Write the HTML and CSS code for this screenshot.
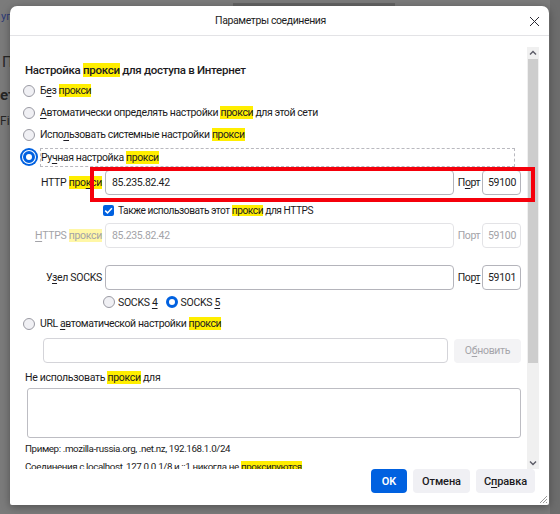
FILE: index.html
```html
<!DOCTYPE html>
<html lang="ru">
<head>
<meta charset="utf-8">
<title>Параметры соединения</title>
<link rel="stylesheet" href="styles.css">
</head>
<body>
<div class="backdrop">
  <span class="bg-text bg-1">уп</span>
  <span class="bg-text bg-2">П</span>
  <span class="bg-text bg-3">ет</span>
  <span class="bg-text bg-4">Fir</span>
  <span class="bg-bar"></span>
  <span class="bg-strip"></span>
</div>

<div class="dialog">
  <div class="titlebar">
    <div class="title">Параметры соединения</div>
    <div class="close">
      <svg width="11" height="11" viewBox="0 0 11 11"><path d="M1 1 L10 10 M10 1 L1 10" stroke="#2b2a33" stroke-width="1" fill="none"/></svg>
    </div>
  </div>

  <div class="body">
    <div class="content">
      <div class="heading">Настройка <span class="hl">прокси</span> для доступа в Интернет</div>

      <div class="radio-row"><span class="radio"></span><span class="rlabel">Б<u>е</u>з <span class="hl">прокси</span></span></div>
      <div class="radio-row"><span class="radio"></span><span class="rlabel"><u>А</u>втоматически определять настройки <span class="hl">прокси</span> для этой сети</span></div>
      <div class="radio-row"><span class="radio"></span><span class="rlabel">Испо<u>л</u>ьзовать системные настройки <span class="hl">прокси</span></span></div>
      <div class="radio-row"><span class="radio on focus"></span><span class="rlabel focusbox">Ру<u>ч</u>ная настройка <span class="hl">прокси</span></span></div>

      <div class="proxy-row">
        <span class="plabel">HTTP <span class="hl">про<u>к</u>си</span></span>
        <span class="input host"><span class="val">85.235.82.42</span></span>
        <span class="port-label">П<u>о</u>рт</span>
        <span class="input port"><span class="val">59100</span></span>
      </div>

      <div class="check-row">
        <span class="checkbox"><svg width="11" height="11" viewBox="0 0 11 11"><path d="M2.2 5.6 L4.5 7.9 L8.9 3.2" stroke="#fff" stroke-width="1.5" fill="none"/></svg></span>
        <span class="clabel">Также использовать этот <span class="hl">прокси</span> для HTTPS</span>
      </div>

      <div class="proxy-row disabled">
        <span class="plabel"><u>H</u>TTPS <span class="hl pale">прокси</span></span>
        <span class="input host"><span class="val">85.235.82.42</span></span>
        <span class="port-label">Порт</span>
        <span class="input port"><span class="val">59100</span></span>
      </div>

      <div class="proxy-row socks">
        <span class="plabel">У<u>з</u>ел SOCKS</span>
        <span class="input host"></span>
        <span class="port-label">Пор<u>т</u></span>
        <span class="input port"><span class="val">59101</span></span>
      </div>

      <div class="socks-row">
        <span class="radio"></span><span class="slabel">SOCKS <u>4</u></span>
        <span class="radio on"></span><span class="slabel">SOCKS <u>5</u></span>
      </div>

      <div class="radio-row"><span class="radio"></span><span class="rlabel">URL <u>а</u>втоматической настройки <span class="hl">прокси</span></span></div>

      <div class="url-row">
        <span class="input url"></span>
        <span class="btn-disabled">О<u>б</u>новить</span>
      </div>

      <div class="line-label">Не использовать <span class="hl">прокси</span> для</div>
      <div class="textarea"></div>
      <div class="note">Пример: .mozilla-russia.org, .net.nz, 192.168.1.0/24</div>
      <div class="note">Соединения с localhost, 127.0.0.1/8 и ::1 никогда не <span class="hl">проксируются</span></div>
    </div>

    <div class="scrollbar">
      <div class="sb-btn"><svg width="8" height="6" viewBox="0 0 8 6"><path d="M1 4.5 L4 1.5 L7 4.5" stroke="#5b5b66" stroke-width="1.4" fill="none"/></svg></div>
      <div class="sb-thumb"></div>
      <div class="sb-track"></div>
      <div class="sb-btn"><svg width="8" height="6" viewBox="0 0 8 6"><path d="M1 1.5 L4 4.5 L7 1.5" stroke="#5b5b66" stroke-width="1.4" fill="none"/></svg></div>
    </div>
  </div>

  <div class="footer">
    <span class="btn primary">OK</span>
    <span class="btn">Отмена</span>
    <span class="btn">С<u>п</u>равка</span>
  </div>

  <div class="red-frame"></div>
  <svg class="grip" width="10" height="10" viewBox="0 0 10 10"><path d="M9 2 L2 9 M9 5 L5 9 M9 8 L8 9" stroke="#9a9a9a" stroke-width="1" fill="none"/></svg>
</div>
</body>
</html>
```

FILE: styles.css
```css
* { box-sizing: border-box; }

html, body {
  margin: 0;
  padding: 0;
}

body {
  width: 560px;
  height: 514px;
  overflow: hidden;
  position: relative;
  background: #7b7b7b;
  font-family: Roboto, "Noto Sans", sans-serif;
  font-size: 10.5px;
  letter-spacing: -0.3px;
  color: #1c1b22;
}

u { text-decoration: underline; text-underline-offset: 2px; text-decoration-thickness: 1px; }

/* backdrop page (dimmed) */
.backdrop { position: absolute; inset: 0; }
.bg-text { position: absolute; white-space: nowrap; color: #262626; letter-spacing: 0; }
.bg-1 { left: 1px; top: 10px; font-size: 11px; color: #2b3a78; }
.bg-2 { left: 2px; top: 53px; font-size: 15px; }
.bg-3 { left: 0; top: 86px; font-size: 15px; font-weight: 700; }
.bg-4 { left: 0; top: 114px; font-size: 12px; }
.bg-bar { position: absolute; left: 233px; top: 3px; width: 162px; height: 3px; background: #646464; }
.bg-strip { position: absolute; right: 0; top: 0; width: 10px; height: 514px; background: #6d6d6d; }

/* dialog window */
.dialog {
  position: absolute;
  left: 10px;
  top: 6px;
  width: 539px;
  height: 499px;
  background: #fff;
  border-radius: 7px 7px 2px 2px;
  box-shadow: 0 2px 8px rgba(0,0,0,0.35);
  display: flex;
  flex-direction: column;
  overflow: hidden;
}

.titlebar {
  height: 30px;
  flex: none;
  border-bottom: 1px solid #e3e3e6;
  display: grid;
  grid-template-columns: 1fr 30px;
  align-items: center;
  padding-left: 12px;
}
.title { text-align: center; font-size: 10.5px; letter-spacing: -0.4px; }
.close { display: flex; justify-content: center; align-items: center; padding-top: 1px; }

.body {
  height: 433px;
  flex: none;
  display: flex;
}

.content {
  width: 517px;
  flex: none;
  overflow: hidden;
  padding: 25px 0 0 15px;
}

.hl { background: #ffee00; }
.hl.pale { background: #fff7a6; }

.heading {
  height: 18px;
  line-height: 18px;
  font-size: 11.5px;
  font-weight: 500;
  letter-spacing: -0.3px;
  margin-bottom: 1px;
}

.radio-row {
  height: 22px;
  display: flex;
  align-items: center;
  margin-left: -2px;
  width: 492px;
}
.rlabel { margin-left: 5px; line-height: 16px; white-space: nowrap; letter-spacing: -0.4px; }
.focusbox {
  flex: 1;
  border: 1px dashed #b9b9bf;
  height: 19px;
  line-height: 17px;
  margin-left: 5px;
}

.radio {
  width: 12px;
  height: 12px;
  flex: none;
  border-radius: 50%;
  border: 1px solid #9a9aa3;
  background: #f0f0f4;
}
.radio.on {
  border: 3.5px solid #0061e0;
  background: #fff;
}
.radio.focus {
  box-shadow: 0 0 0 1px #fff, 0 0 0 3px #0061e0;
}

.proxy-row {
  display: flex;
  align-items: center;
  margin-top: 2px;
  height: 25px;
}
.proxy-row > * { flex: none; }
.proxy-row.socks { margin-top: 17px; }
.plabel {
  width: 77px;
  margin-right: 3px;
  text-align: right;
  white-space: nowrap;
}
.input {
  height: 25px;
  border: 1px solid #b4b4bb;
  border-radius: 4px;
  display: flex;
  align-items: center;
  background: #fff;
}
.input .val { padding-left: 6px; }
.input.host { width: 349px; }
.port-label { width: 24px; margin-left: 3px; margin-right: 1px; text-align: center; font-size: 10.5px; letter-spacing: -0.4px; }
.input.port { width: 39px; }
.input.port .val { padding-left: 5px; }

.disabled { color: #a3a3a8; }
.disabled .input { border-color: #e3e3e6; }

.check-row {
  display: flex;
  align-items: center;
  height: 22px;
  margin-top: 4px;
  padding-left: 78px;
}
.clabel { font-size: 10.2px; letter-spacing: -0.45px; white-space: nowrap; }
.checkbox {
  width: 11px;
  height: 11px;
  border-radius: 2px;
  background: #0061e0;
  margin-right: 4px;
  display: flex;
}

.socks-row {
  display: flex;
  align-items: center;
  height: 22px;
  margin-top: 1px;
  padding-left: 78px;
}
.slabel { margin-left: 3px; margin-right: 8px; }

.url-row {
  display: flex;
  align-items: center;
  margin-top: 3px;
  height: 25px;
}
.url-row > * { flex: none; }
.input.url { width: 405px; height: 25px; margin-left: 18px; border-color: #d4d4d9; }
.btn-disabled {
  margin-left: 6px;
  width: 67px;
  height: 24px;
  border-radius: 4px;
  background: #f3f3f5;
  color: #a5a5aa;
  display: flex;
  align-items: center;
  justify-content: center;
}

.line-label {
  margin-top: 6px;
  height: 18px;
  line-height: 18px;
}

.textarea {
  margin-top: 1px;
  margin-left: 2px;
  width: 494px;
  height: 50px;
  border: 1px solid #bdbdc3;
  border-radius: 3px;
}

.note {
  font-size: 9.8px;
  letter-spacing: -0.4px;
  height: 18px;
  line-height: 18px;
  white-space: nowrap;
}
.textarea + .note { margin-top: 2px; }

.scrollbar {
  width: 12px;
  flex: none;
  margin-top: 11px;
  height: 422px;
  display: flex;
  flex-direction: column;
  background: #f0f0f0;
}
.sb-btn {
  height: 12px;
  display: flex;
  align-items: center;
  justify-content: center;
  flex: none;
}
.sb-thumb { height: 304px; background: #cdcdcd; flex: none; margin: 0 1px; }
.sb-track { flex: 1; }

.footer {
  flex: 1;
  display: flex;
  justify-content: flex-end;
  align-items: flex-start;
  gap: 6px;
  padding-right: 14px;
}
.btn {
  height: 24px;
  border-radius: 4px;
  background: #f0f0f4;
  display: flex;
  align-items: center;
  justify-content: center;
  font-size: 11px;
  letter-spacing: -0.1px;
  font-weight: 500;
}
.btn:nth-child(2) { width: 57px; }
.btn:nth-child(3) { width: 59px; }
.btn.primary { width: 36px; background: #0061e0; color: #fff; font-weight: 600; }

.red-frame {
  position: absolute;
  left: 80px;
  top: 161px;
  width: 445px;
  height: 35px;
  border: 4px solid #f5000b;
}

.grip { position: absolute; right: 1px; bottom: 1px; }
```
